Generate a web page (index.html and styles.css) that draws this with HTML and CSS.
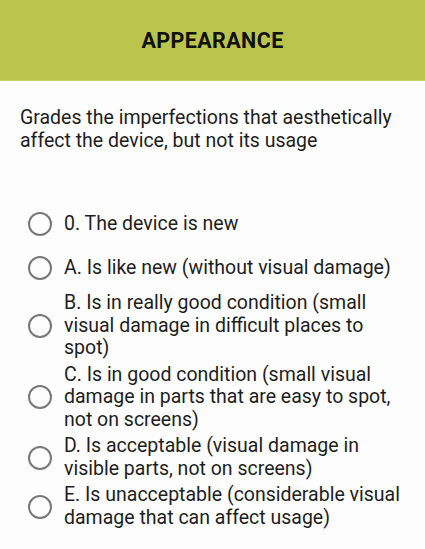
FILE: index.html
```html
<!DOCTYPE html>
<html lang="en">
<head>
<meta charset="utf-8">
<title>Appearance</title>
<link rel="stylesheet" href="styles.css">
</head>
<body>
<header class="header">
  <h1 class="title">APPEARANCE</h1>
</header>
<p class="desc">Grades the imperfections that aesthetically affect the device, but not its usage</p>
<div class="options">
  <label class="option"><span class="radio"></span><span class="label">0. The device is new</span></label>
  <label class="option"><span class="radio"></span><span class="label">A. Is like new (without visual damage)</span></label>
  <label class="option"><span class="radio"></span><span class="label">B. Is in really good condition (small visual damage in difficult places to spot)</span></label>
  <label class="option"><span class="radio"></span><span class="label">C. Is in good condition (small visual damage in parts that are easy to spot, not on screens)</span></label>
  <label class="option"><span class="radio"></span><span class="label">D. Is acceptable (visual damage in visible parts, not on screens)</span></label>
  <label class="option"><span class="radio"></span><span class="label">E. Is unacceptable (considerable visual damage that can affect usage)</span></label>
</div>
</body>
</html>
```
FILE: styles.css
```css
html, body {
  margin: 0;
  padding: 0;
  background: #fdfdfd;
}
body {
  font-family: Roboto, "Noto Sans", sans-serif;
  color: #1e1e1e;
  width: 425px;
  height: 549px;
  overflow: hidden;
}
.header {
  height: 80px;
  background: #bbc44b;
  border-bottom: 1px solid #c9d070;
  display: flex;
  align-items: center;
  justify-content: center;
}
.title {
  margin: 0;
  font-size: 21.5px;
  font-weight: 700;
  color: #111;
  letter-spacing: 0.4px;
}
.desc {
  margin: 26px 16px 0 20px;
  font-size: 19.5px;
  line-height: 22.5px;
}
.options {
  margin-top: 50px;
  display: flex;
  flex-direction: column;
}
.option {
  display: flex;
  align-items: center;
  min-height: 44px;
  padding: 2px 16px 2px 28px;
  box-sizing: border-box;
  gap: 12px;
}
.radio {
  flex: none;
  width: 24px;
  height: 24px;
  box-sizing: border-box;
  border: 2.5px solid #787878;
  border-radius: 50%;
}
.label {
  font-size: 19.5px;
  line-height: 22.5px;
}
```
